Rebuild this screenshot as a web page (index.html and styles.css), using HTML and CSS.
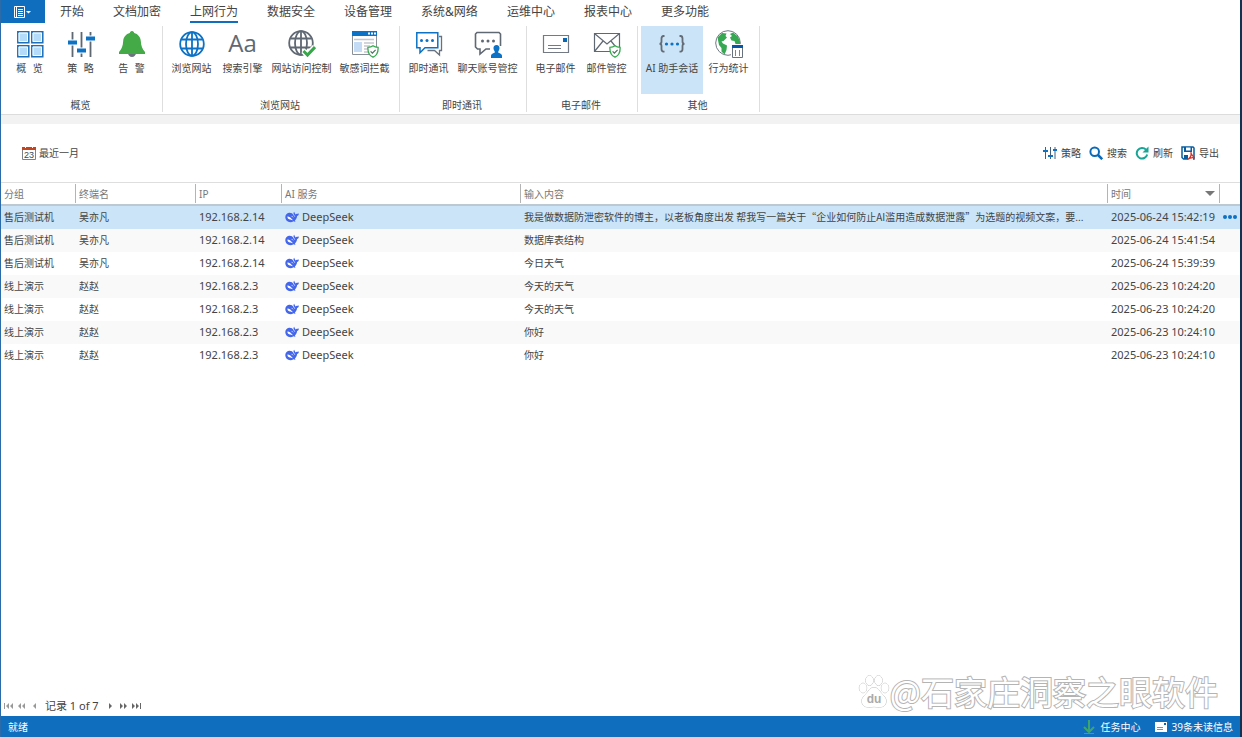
FILE: index.html
```html
<!DOCTYPE html>
<html lang="zh-CN">
<head>
<meta charset="utf-8">
<title>AI 助手会话</title>
<link rel="stylesheet" href="styles.css">
</head>
<body>
<svg class="defs" aria-hidden="true">
  <symbol id="deepseek" viewBox="0 0 14 12">
    <path fill="#4366ea" d="M7 2.200C6 1.800 5 1.500 4 1.700 1.900 2 .3 3.700.3 6c0 3 2.200 5.200 5 5.200 1.300 0 2.300-.4 3.200-.9.700.3 1.500.5 1.900.2.300-.3-.3-.5-.6-1C11.400 8 12 6.500 12.100 5c1-.3 1.700-1.200 1.800-2.600-.8.300-1.400.2-2 .3-.6.100-1 .5-1.200.8C10.200 2.800 9.500 2 9.300.7c-.9.700-1 1.900-.5 2.900.5 1 1.300 1.500 1.500 2.500-1.200-.7-2-2.700-3.300-3.900z"/>
    <path fill="#fff" d="M2.400 5.500C4 5.300 5.800 6.600 7 8.200c.3.400.6.700.9.900-.6.100-1.200 0-1.800-.4-.6-.3-.9-.3-1.300-.2C3.200 8.200 2.300 7 2.400 5.500z"/>
    <path fill="none" stroke="#fff" stroke-width=".6" d="M6.500 5.300c.7-.1 1.500.4 1.600 1.100"/>
  </symbol>
  <symbol id="shield" viewBox="0 0 12 13">
    <path fill="#fff" stroke="#36ab4e" stroke-width="1.300" d="M6 .8C4.500 2 2.800 2.300.9 2.300c-.2 4.500.9 8 5.100 9.900 4.200-1.900 5.300-5.400 5.100-9.900C9.200 2.300 7.500 2 6 .8z"/>
    <path fill="none" stroke="#4f6d61" stroke-width="1.200" d="M3.600 6.400l1.800 1.800 3.200-3.400"/>
  </symbol>
  <symbol id="globe" viewBox="0 0 26 26">
    <g fill="none" stroke="currentColor" stroke-width="1.800"><circle cx="13" cy="13" r="11.800"/><ellipse cx="13" cy="13" rx="6" ry="11.800"/><path d="M13 1v24M2.500 8.500h21M2.500 17.500h21"/></g>
  </symbol>
</svg>

<div class="window">
  <nav class="tabs" aria-label="主菜单">
    <button class="app-button" aria-label="应用菜单">
      <svg width="20" height="14" viewBox="0 0 20 14"><path fill="none" stroke="#fff" d="M1.500 1.500h10v11h-10zM3.500 1.500v11M5 4.500h5M5 6.500h5M5 8.500h5M5 10.500h5"/><path fill="#fff" d="M13 6h5l-2.500 2.500z"/></svg>
    </button>
    <button class="tab">开始</button>
    <button class="tab">文档加密</button>
    <button class="tab tab-active">上网行为</button>
    <button class="tab">数据安全</button>
    <button class="tab">设备管理</button>
    <button class="tab">系统&amp;网络</button>
    <button class="tab">运维中心</button>
    <button class="tab">报表中心</button>
    <button class="tab">更多功能</button>
  </nav>

  <div class="ribbon">
    <section class="group">
      <div class="tools">
        <button class="tool">
          <svg width="28" height="28" viewBox="0 0 28 28"><g fill="#b4dbfa" stroke="#1d6fb8" stroke-width="1.500"><path d="M1.800 1.800h11v11h-11zM15.800 1.800h11v11h-11zM1.800 15.800h11v11h-11zM15.800 15.800h11v11h-11z"/></g><path fill="none" stroke="#fff" d="M3 3h8.500v8.500H3zM17 3h8.500v8.500H17zM3 17h8.500v8.500H3zM17 17h8.500v8.500H17z"/></svg>
          <span>概&ensp;&thinsp;览</span>
        </button>
        <button class="tool">
          <svg width="28" height="28" viewBox="0 0 28 28"><path stroke="#5d6873" stroke-width="1.800" d="M5.500 2v25M14.500 2v25M23.500 2v25"/><path stroke="#fff" stroke-width="6" d="M1 12.500h9M10 20.500h9M19 8.500h9"/><path stroke="#0b72c5" stroke-width="4" d="M1 12.500h9M10 20.500h9M19 8.500h9"/></svg>
          <span>策&ensp;&thinsp;略</span>
        </button>
        <button class="tool">
          <svg width="28" height="28" viewBox="0 0 28 28"><path fill="#6d7480" d="M10 23h8c0 2-1.800 4-4 4s-4-2-4-4z"/><path fill="#44a947" d="M14 1c1.400 0 2 1 2.200 2C20 4 22.500 7 22.800 11c.3 5 1.500 8 4.200 11v2H1v-2c2.700-3 3.900-6 4.200-11C5.500 7 8 4 11.800 3 12 2 12.600 1 14 1z"/></svg>
          <span>告&ensp;&thinsp;警</span>
        </button>
      </div>
      <h2 class="group-name">概览</h2>
    </section>

    <section class="group">
      <div class="tools">
        <button class="tool">
          <svg class="blue" width="28" height="28" viewBox="0 0 28 28"><use href="#globe" x="1" y="1" width="26" height="26"/></svg>
          <span>浏览网站</span>
        </button>
        <button class="tool">
          <span class="letters" aria-hidden="true">Aa</span>
          <span>搜索引擎</span>
        </button>
        <button class="tool tool-wide">
          <svg class="slate" width="28" height="28" viewBox="0 0 28 28"><use href="#globe" width="26" height="26"/><path fill="none" stroke="#fff" stroke-width="6" d="M15.500 21l4 4 7.500-8"/><path fill="none" stroke="#38a64a" stroke-width="3" d="M15.500 21l4 4 7.500-8"/></svg>
          <span>网站访问控制</span>
        </button>
        <button class="tool tool-medium">
          <svg width="28" height="28" viewBox="0 0 28 28"><path fill="#fff" stroke="#8a9098" d="M1.500 1.500h24v23h-24z"/><path fill="#0b72c5" d="M1 1h25v5H1z"/><path fill="#fff" d="M17 2.500h2v2h-2zM20 2.500h2v2h-2zM23 2.500h2v2h-2z"/><path fill="#c3dbf4" d="M3 12h8v10H3z"/><path stroke="#c4c8cd" stroke-width="1.500" d="M3 9.500h20M13 13h10M13 16h6M13 19h4M13 22h4"/><use href="#shield" x="16" y="15" width="12" height="13"/></svg>
          <span>敏感词拦截</span>
        </button>
      </div>
      <h2 class="group-name">浏览网站</h2>
    </section>

    <section class="group">
      <div class="tools">
        <button class="tool">
          <svg width="28" height="28" viewBox="0 0 28 28"><path fill="none" stroke="#68717d" stroke-width="1.300" d="M24 6.500h2.500v14h-2v4.500l-5-4.500h-7"/><path fill="#fff" stroke="#0b72c5" stroke-width="1.500" d="M1.800 2.800h21v15H10l-5 5v-5H1.800z"/><g fill="#0b72c5"><circle cx="6.500" cy="10.500" r="1.500"/><circle cx="12" cy="10.500" r="1.500"/><circle cx="17.500" cy="10.500" r="1.500"/></g></svg>
          <span>即时通讯</span>
        </button>
        <button class="tool tool-wide">
          <svg width="28" height="28" viewBox="0 0 28 28"><path fill="#fff" stroke="#606873" stroke-width="1.600" d="M16 19h-4l-6 5v-5H3.500l-2-2V4l1.500-1.500h22L26.500 4v12"/><g fill="#606873"><circle cx="8.500" cy="11" r="1.500"/><circle cx="14" cy="11" r="1.500"/><circle cx="19.500" cy="11" r="1.500"/></g><path fill="#0b72c5" d="M22.500 15c2 0 3.200 1.500 3 3.500-.1 1.200-.6 2.200-1.200 2.800v1.500c2.200.5 3.700 1.500 3.700 3V28H17v-2.200c0-1.500 1.500-2.500 3.700-3v-1.500c-.6-.6-1.100-1.600-1.200-2.800-.2-2 1-3.500 3-3.500z"/></svg>
          <span>聊天账号管控</span>
        </button>
      </div>
      <h2 class="group-name">即时通讯</h2>
    </section>

    <section class="group">
      <div class="tools">
        <button class="tool">
          <svg width="28" height="28" viewBox="0 0 28 28"><path fill="#fff" stroke="#737a84" stroke-width="1.200" d="M1.500 5.500h25v17h-25z"/><path fill="#0b65b5" d="M21 8h4v4h-4z"/><path stroke="#737a84" d="M6 15.500h13M6 18.500h13"/></svg>
          <span>电子邮件</span>
        </button>
        <button class="tool">
          <svg width="28" height="28" viewBox="0 0 28 28"><path fill="#fff" stroke="#606873" stroke-width="1.200" d="M1.500 3.500h25v18h-25zM1.500 3.500L14 14 26.500 3.500M1.500 21.500L10 11M26.500 21.500L18 11"/><use href="#shield" x="16" y="15" width="12" height="13"/></svg>
          <span>邮件管控</span>
        </button>
      </div>
      <h2 class="group-name">电子邮件</h2>
    </section>

    <section class="group">
      <div class="tools">
        <button class="tool tool-large tool-selected">
          <svg width="28" height="28" viewBox="0 0 28 28"><path fill="none" stroke="#626b76" stroke-width="1.800" d="M6.500 6H5.500C4 6 3.500 7 3.500 8.500v3c0 1.500-.5 2.300-2 2.300 1.500 0 2 .8 2 2.300v3c0 1.500.5 2.500 2 2.500h1M21.500 6h1c1.500 0 2 1 2 2.500v3c0 1.500.5 2.300 2 2.300-1.500 0-2 .8-2 2.300v3c0 1.500-.5 2.500-2 2.500h-1"/><g fill="#0b72c5"><circle cx="8.500" cy="14" r="1.600"/><circle cx="14" cy="14" r="1.600"/><circle cx="19.500" cy="14" r="1.600"/></g></svg>
          <span>AI 助手会话</span>
        </button>
        <button class="tool">
          <svg width="28" height="28" viewBox="0 0 28 28"><circle cx="13" cy="13" r="12.300" fill="#fff" stroke="#727983"/><path fill="#36a852" d="M2.500 7.500L7 3l4.500.5-1 2.500 1.500 1.500-3.500 3.500-2 .5 1.500 2 4 2-.5 4.500-2 4.500-3-3V18l-2.500-3zM15 4l3-1.500 5 4 2 5v5l-2.500-2-2-.5-1-3-3-.5L15 7.500l2-1.500z"/><path fill="#fff" d="M16 14h12v14H16z"/><path fill="#fff" stroke="#68717d" d="M17.500 16.500h10v11h-10z"/><path fill="#0755a5" d="M17 15h11v3H17z"/><path stroke="#7a8694" d="M20.500 20v6M24.500 20v6"/></svg>
          <span>行为统计</span>
        </button>
      </div>
      <h2 class="group-name">其他</h2>
    </section>
  </div>

  <div class="toolbar">
    <button class="action">
      <svg width="14" height="14" viewBox="0 0 14 14"><path fill="#fff" stroke="#7c8289" d="M.5 2.500h13v11H.5z"/><path fill="#c54420" d="M0 1h14v3H0z"/><path stroke="#fff" d="M3.500 0v2M10.500 0v2"/><text class="date-number" x="7" y="12">23</text></svg>
      最近一月
    </button>
    <div class="actions">
      <button class="action">
        <svg width="14" height="14" viewBox="0 0 14 14"><path stroke="#45617c" d="M2.500 1v12M7.500 1v12M12 1v12"/><path stroke="#0b72c5" stroke-width="2" d="M0 5h5M5 10h5M10 4h4"/></svg>
        策略
      </button>
      <button class="action">
        <svg width="14" height="14" viewBox="0 0 14 14"><circle cx="5.700" cy="5.700" r="4.300" fill="none" stroke="#0b6ab8" stroke-width="2"/><path stroke="#0b6ab8" stroke-width="2.500" d="M9 9l4.200 4.200"/></svg>
        搜索
      </button>
      <button class="action">
        <svg width="14" height="14" viewBox="0 0 14 14"><path fill="none" stroke="#16a596" stroke-width="2" d="M11 3.700A5.300 5.300 0 1 0 12.200 8.500"/><path fill="#16a596" d="M13.500.5v6h-6z"/></svg>
        刷新
      </button>
      <button class="action">
        <svg width="14" height="14" viewBox="0 0 14 14"><path fill="#fff" stroke="#075b9f" stroke-width="1.500" d="M1 1h11l1 1v11H2.500L1 11.500z"/><path fill="#075b9f" d="M3 1h8v5H3zM3 9h4v4H3z"/><path fill="#fff" d="M5 1.500h4.500v3H5z"/><path fill="#fff" d="M7 8h5v6H7z"/><path fill="none" stroke="#d0342c" stroke-width="1.300" d="M9.500 6.500c1 2 2 4 4.500 5.500-2.500-1-5-.3-7.500 1.500C9 12 10.500 9 10 6.500"/></svg>
        导出
      </button>
    </div>
  </div>

  <main class="content">
    <table class="grid">
      <colgroup><col class="col-group"><col class="col-terminal"><col class="col-ip"><col class="col-service"><col><col class="col-time"><col class="col-more"></colgroup>
      <thead>
        <tr><th>分组</th><th>终端名</th><th>IP</th><th>AI 服务</th><th>输入内容</th><th><span class="sorted">时间<svg width="10" height="5" viewBox="0 0 10 5"><path fill="#777" d="M0 0h10L5 5z"/></svg></span></th><th></th></tr>
      </thead>
      <tbody>
        <tr class="selected"><td>售后测试机</td><td>吴亦凡</td><td class="latin">192.168.2.14</td><td class="latin"><span class="service"><svg width="14" height="12"><use href="#deepseek"/></svg>DeepSeek</span></td><td class="prompt">我是做数据防泄密软件的博主，以老板角度出发 帮我写一篇关于“企业如何防止AI滥用造成数据泄露”为选题的视频文案，要...</td><td class="latin">2025-06-24 15:42:19</td><td><button class="more" aria-label="更多"><svg width="14" height="4" viewBox="0 0 14 4"><g fill="#0b72c5"><circle cx="2" cy="2" r="2"/><circle cx="7" cy="2" r="2"/><circle cx="12" cy="2" r="2"/></g></svg></button></td></tr>
        <tr><td>售后测试机</td><td>吴亦凡</td><td class="latin">192.168.2.14</td><td class="latin"><span class="service"><svg width="14" height="12"><use href="#deepseek"/></svg>DeepSeek</span></td><td class="prompt">数据库表结构</td><td class="latin">2025-06-24 15:41:54</td><td></td></tr>
        <tr><td>售后测试机</td><td>吴亦凡</td><td class="latin">192.168.2.14</td><td class="latin"><span class="service"><svg width="14" height="12"><use href="#deepseek"/></svg>DeepSeek</span></td><td class="prompt">今日天气</td><td class="latin">2025-06-24 15:39:39</td><td></td></tr>
        <tr><td>线上演示</td><td>赵赵</td><td class="latin">192.168.2.3</td><td class="latin"><span class="service"><svg width="14" height="12"><use href="#deepseek"/></svg>DeepSeek</span></td><td class="prompt">今天的天气</td><td class="latin">2025-06-23 10:24:20</td><td></td></tr>
        <tr><td>线上演示</td><td>赵赵</td><td class="latin">192.168.2.3</td><td class="latin"><span class="service"><svg width="14" height="12"><use href="#deepseek"/></svg>DeepSeek</span></td><td class="prompt">今天的天气</td><td class="latin">2025-06-23 10:24:20</td><td></td></tr>
        <tr><td>线上演示</td><td>赵赵</td><td class="latin">192.168.2.3</td><td class="latin"><span class="service"><svg width="14" height="12"><use href="#deepseek"/></svg>DeepSeek</span></td><td class="prompt">你好</td><td class="latin">2025-06-23 10:24:10</td><td></td></tr>
        <tr><td>线上演示</td><td>赵赵</td><td class="latin">192.168.2.3</td><td class="latin"><span class="service"><svg width="14" height="12"><use href="#deepseek"/></svg>DeepSeek</span></td><td class="prompt">你好</td><td class="latin">2025-06-23 10:24:10</td><td></td></tr>
      </tbody>
    </table>
  </main>

  <div class="pager">
    <button class="page" aria-label="第一条"><svg width="10" height="6" viewBox="0 0 10 6"><path fill="#999" d="M0 0h1v6H0zM5 0v6L2 3zM9 0v6L6 3z"/></svg></button>
    <button class="page" aria-label="上一页"><svg width="10" height="6" viewBox="0 0 10 6"><path fill="#999" d="M4 0v6L1 3zM8 0v6L5 3z"/></svg></button>
    <button class="page" aria-label="上一条"><svg width="10" height="6" viewBox="0 0 10 6"><path fill="#999" d="M6 0v6L3 3z"/></svg></button>
    <span class="record">记录 1 of 7</span>
    <button class="page" aria-label="下一条"><svg width="10" height="6" viewBox="0 0 10 6"><path fill="#666" d="M4 0v6l3-3z"/></svg></button>
    <button class="page" aria-label="下一页"><svg width="10" height="6" viewBox="0 0 10 6"><path fill="#666" d="M2 0v6l3-3zM6 0v6l3-3z"/></svg></button>
    <button class="page" aria-label="最后一条"><svg width="10" height="6" viewBox="0 0 10 6"><path fill="#666" d="M1 0v6l3-3zM5 0v6l3-3zM9 0h1v6H9z"/></svg></button>
  </div>

  <div class="watermark">
    <svg width="32" height="34" viewBox="0 0 32 34"><g fill="#fff" stroke="#bdbdbd" stroke-width="1"><ellipse cx="5" cy="14" rx="3.700" ry="4.800"/><ellipse cx="11.500" cy="6.500" rx="3.700" ry="5"/><ellipse cx="20.500" cy="6.500" rx="3.700" ry="5"/><ellipse cx="27" cy="14" rx="3.700" ry="4.800"/><path d="M16 13.500c4 0 5.500 4 8.500 7 3.500 3.500 4.500 6 3 9.500s-6 3.300-11.500 2.700C10.500 33.300 6 33.500 4.500 30s-.5-6 3-9.500c3-3 4.500-7 8.500-7z"/></g><text class="paw-text" x="16" y="29">du</text></svg>
    <span>@石家庄洞察之眼软件</span>
  </div>

  <footer class="status">
    <span>就绪</span>
    <div class="status-links">
      <button class="status-link"><svg width="14" height="14" viewBox="0 0 14 14"><path fill="none" stroke="#3da66d" stroke-width="2" d="M7 0v12M2 7l5 5 5-5"/><path stroke="#3da66d" d="M2 13.500h10"/></svg>任务中心</button>
      <button class="status-link"><svg width="12" height="10" viewBox="0 0 12 10"><path fill="#fff" d="M0 0h12v10H0z"/><path fill="#0b65b5" d="M9 1h2v2H9z"/><path stroke="#8a8f96" d="M2 5.500h6M2 7.500h6"/></svg>39条未读信息</button>
    </div>
  </footer>
</div>
</body>
</html>
```

FILE: styles.css
```css
* { box-sizing: border-box; }

body {
  margin: 0;
  color: #444;
  font-family: "Noto Sans", "Noto Sans CJK SC", sans-serif;
  font-size: 10px;
  line-height: 14px;
}

button {
  margin: 0;
  padding: 0;
  border: 0;
  background: none;
  color: inherit;
  font: inherit;
  white-space: nowrap;
}

svg { display: block; flex: none; }

.defs { position: absolute; width: 0; height: 0; }

.window {
  position: relative;
  display: flex;
  flex-direction: column;
  min-height: 100vh;
  border-left: 1px solid #2b6ca8;
  border-right: 2px solid #0f3350;
  background: #fff;
}

/* Menu tabs */
.tabs { display: flex; gap: 29px; height: 23px; }

.app-button {
  display: flex;
  align-items: center;
  justify-content: center;
  width: 44px;
  margin-right: -14px;
  background: #106ebe;
}

.tab {
  padding-top: 3px;
  border-bottom: 2px solid transparent;
  color: #444;
  font-size: 12px;
  line-height: 18px;
}

.tab-active { border-color: #106ebe; }

/* Ribbon */
.ribbon {
  display: flex;
  height: 101px;
  padding-top: 3px;
  border-bottom: 9px solid #f2f2f2;
  box-shadow: inset 0 -1px #dcdcdc;
}

.group {
  display: flex;
  flex-direction: column;
  height: 86px;
  padding: 0 5px 0 3px;
  border-right: 1px solid #dedede;
  box-sizing: content-box;
}

.tools { display: flex; height: 68px; }

.tool {
  display: flex;
  flex-direction: column;
  align-items: center;
  gap: 3px;
  width: 51px;
  padding-top: 4px;
}

.tool-medium { width: 59px; }
.tool-large { width: 62px; }
.tool-wide { width: 67px; }
.tool-selected { background: #cce4f7; }

.blue { color: #0b72c5; }
.slate { color: #606873; }

.letters {
  height: 28px;
  color: #606873;
  font-family: "Open Sans", sans-serif;
  font-size: 24px;
  line-height: 26px;
}

.group-name {
  margin: auto 0 0;
  font-size: 10px;
  font-weight: 400;
  text-align: center;
}

/* Toolbar */
.toolbar {
  display: flex;
  align-items: center;
  justify-content: space-between;
  height: 58px;
  padding: 0 21px;
}

.actions { display: flex; gap: 8px; }
.action { display: flex; align-items: center; gap: 3px; }
.actions .action { gap: 4px; }

.date-number {
  fill: #444;
  font-family: "Liberation Sans", sans-serif;
  font-size: 9px;
  text-anchor: middle;
}

/* Records */
.content { flex: 1; border-top: 1px solid #dedede; }

.grid {
  width: 100%;
  border-collapse: separate;
  border-spacing: 0;
  table-layout: fixed;
}

.col-group { width: 75px; }
.col-terminal { width: 120px; }
.col-ip { width: 86px; }
.col-service { width: 239px; }
.col-time { width: 112px; }
.col-more { width: 20px; }

.grid th {
  height: 23px;
  padding: 0 3px;
  border-bottom: 2px solid #bcc8d2;
  background: linear-gradient(#b4b4b4, #b4b4b4) right 1px / 1px 19px no-repeat;
  color: #777;
  font-weight: 400;
  text-align: left;
}

.grid th:last-child { background: none; }

.grid td {
  height: 23px;
  padding: 0 3px 2px;
  overflow: hidden;
  white-space: nowrap;
}

.grid tbody tr:nth-child(even) { background: #f9f9f9; }
.grid tbody .selected { background: #cce4f7; }
.grid .latin { font-size: 11px; }
.grid .prompt { font-family: "Noto Sans CJK SC", sans-serif; }

.sorted { display: flex; align-items: center; justify-content: space-between; padding-right: 2px; }
.service { display: flex; align-items: center; gap: 3px; }
.more { display: block; }

/* Pager */
.pager {
  display: flex;
  align-items: center;
  gap: 3px;
  height: 20px;
  padding-left: 3px;
}

.record { padding: 0 3px 0 2px; font-size: 11px; }

.watermark {
  position: absolute;
  right: 22px;
  bottom: 22px;
  display: flex;
  align-items: center;
  color: #fff;
  font-family: "Noto Sans CJK SC", sans-serif;
  font-size: 33px;
  line-height: 48px;
  -webkit-text-stroke: 2px #b4b4b4;
  paint-order: stroke fill;
  pointer-events: none;
}

.paw-text {
  fill: #aaa;
  font-family: "Liberation Sans", sans-serif;
  font-size: 12px;
  font-weight: 700;
  text-anchor: middle;
  -webkit-text-stroke: 0;
}

/* Status bar */
.status {
  display: flex;
  align-items: center;
  justify-content: space-between;
  height: 21px;
  padding: 0 7px;
  background: #106ebe;
  color: #fff;
}

.status-links { display: flex; gap: 14px; }
.status-link { display: flex; align-items: center; gap: 5px; }
```
